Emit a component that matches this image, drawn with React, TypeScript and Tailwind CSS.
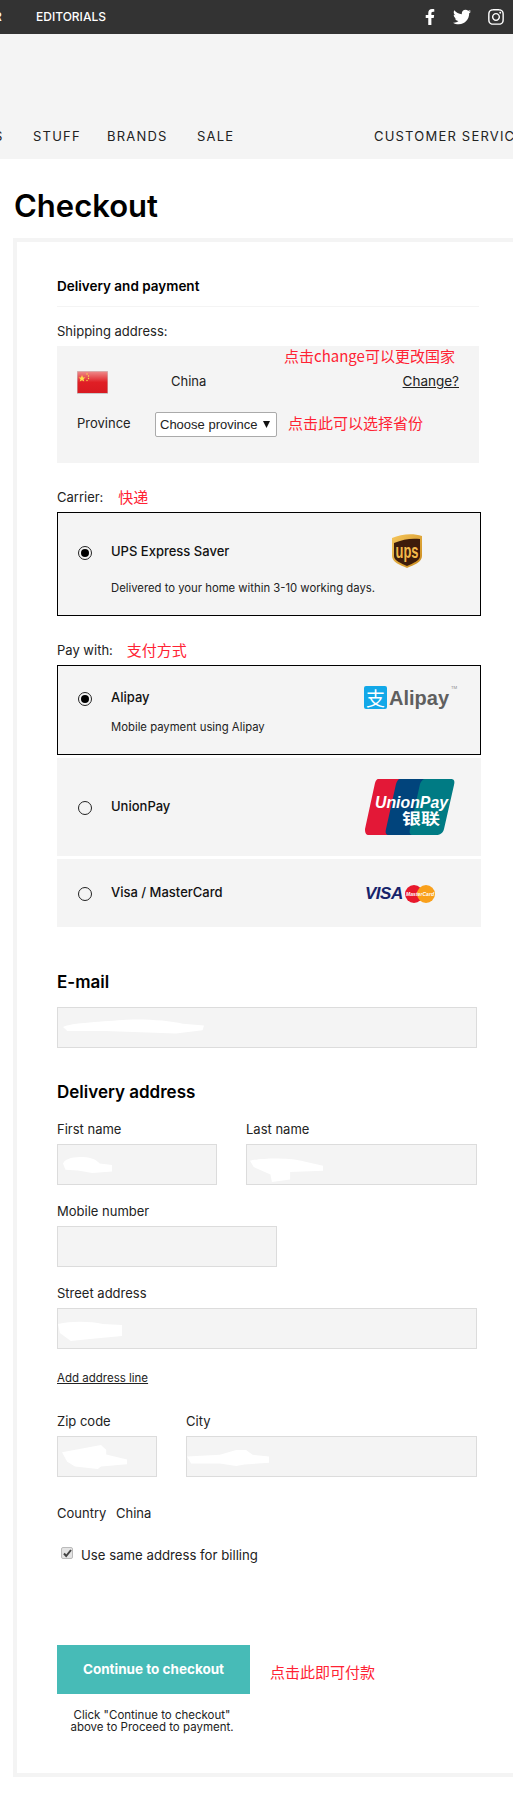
import type { ReactNode } from "react"
import { FaFacebookF, FaTwitter, FaInstagram } from "react-icons/fa"

const cjk = "font-['Noto_Sans_CJK_SC',sans-serif] text-[15px] leading-5 text-[#ff2233]"

function Note({ children, className = "" }: { children: ReactNode; className?: string }) {
  return <span className={`${cjk} ${className}`}>{children}</span>
}

function Radio({ checked = false }: { checked?: boolean }) {
  return (
    <span className="flex h-[14px] w-[14px] shrink-0 items-center justify-center rounded-full border border-[#222] bg-[#f4f4f4]">
      {checked && <span className="h-2 w-2 rounded-full bg-black" />}
    </span>
  )
}

function Option({
  title,
  desc,
  checked,
  logo,
  className,
  radioTop,
  titleTop,
  descTop,
  logoTop,
}: {
  title: string
  desc?: string
  checked?: boolean
  logo: ReactNode
  className: string
  radioTop: string
  titleTop: string
  descTop?: string
  logoTop: string
}) {
  return (
    <div className={`flex w-[424px] bg-[#f4f4f4] ${className}`}>
      <div className={radioTop}>
        <Radio checked={checked} />
      </div>
      <div className={`ml-[19px] w-[240px] shrink-0 whitespace-nowrap ${titleTop}`}>
        <div className="h-5 text-[13px] font-medium leading-5 text-[#111]">{title}</div>
        {desc && <div className={`h-4 text-[11.300px] leading-4 text-[#222] ${descTop}`}>{desc}</div>}
      </div>
      <div className={`ml-auto w-[116px] shrink-0 ${logoTop}`}>{logo}</div>
    </div>
  )
}

function Blob({ d, className }: { d: string; className: string }) {
  return (
    <svg className={`absolute ${className}`} viewBox="0 0 100 20" preserveAspectRatio="none">
      <path d={d} fill="#fff" />
    </svg>
  )
}

function Field({ label, className, children }: { label: string; className: string; children?: ReactNode }) {
  return (
    <div className={className}>
      <div className="h-5 text-[13px] leading-5 text-[#222]">{label}</div>
      <div className="relative mt-[5px] h-[41px] w-full border border-[#dcdcdc] bg-[#f4f4f4]">{children}</div>
    </div>
  )
}

function UpsLogo() {
  return (
    <svg className="ml-7 h-[35px] w-[30px]" viewBox="0 0 30 35">
      <defs>
        <linearGradient id="upsGold" x1="0" y1="0" x2="1" y2="1">
          <stop offset="0" stopColor="#f6c65b" />
          <stop offset="1" stopColor="#c98a1e" />
        </linearGradient>
      </defs>
      <path d="M0 5C9 1 21 0 30 3v20c0 6-8 9-15 12C8 32 0 29 0 23z" fill="url(#upsGold)" />
      <path d="M2 10c9-4 18-5 26-4v17c0 5-7 7-13 10C9 30 2 28 2 23z" fill="#3d1c0b" />
      <text x="15" y="25" textAnchor="middle" fontSize="21" fontWeight="700" textLength="23" lengthAdjust="spacingAndGlyphs" fill="#f3b94a" className="font-['Liberation_Sans',sans-serif]">
        ups
      </text>
    </svg>
  )
}

function AlipayLogo() {
  return (
    <div className="flex items-start">
      <div className="flex h-[23px] w-[23px] items-center justify-center rounded-[2px] bg-[#12a8e8] font-['Noto_Sans_CJK_SC',sans-serif] text-[19px] leading-none text-white">
        支
      </div>
      <span className="ml-[2px] font-['Liberation_Sans',sans-serif] text-[20px] font-bold leading-[24px] text-[#5f5f5f]">Alipay</span>
      <span className="ml-[2px] text-[4px] leading-[4px] text-[#888]">TM</span>
    </div>
  )
}

function UnionPayLogo() {
  return (
    <svg className="h-14 w-[90px]" viewBox="0 0 90 56">
      <path d="M13 0h30c4 0 6 2 5 6L38 50c-1 4-4 6-8 6H4c-3 0-4-2-4-6L10 4c1-3 2-4 3-4z" fill="#e31837" />
      <path d="M35 0h33c3 0 4 2 3 6L61 50c-1 4-4 6-8 6H24c-3 0-4-2-3-6L31 5c1-3 2-5 4-5z" fill="#01447c" />
      <path d="M60 0h26c3 0 4 2 3 6L79 50c-1 4-4 6-8 6H48c-3 0-4-2-3-6L55 5c1-3 3-5 5-5z" fill="#007b84" />
      <text x="10" y="29" fontSize="16.5" fontWeight="700" fontStyle="italic" textLength="73" lengthAdjust="spacingAndGlyphs" fill="#fff" className="font-['Liberation_Sans',sans-serif]">
        UnionPay
      </text>
      <text x="37" y="45" fontSize="15" fontWeight="700" textLength="38" lengthAdjust="spacingAndGlyphs" fill="#fff" className="font-['Noto_Sans_CJK_SC',sans-serif]">
        银联
      </text>
    </svg>
  )
}

function VisaLogo() {
  return (
    <div className="flex items-center">
      <span className="w-[38px] font-['Liberation_Sans',sans-serif] text-[17px] font-bold italic leading-[22px] tracking-[-0.5px] text-[#16236b]">VISA</span>
      <svg className="ml-[2px] h-[18px] w-[30px]" viewBox="0 0 30 18">
        <circle cx="9" cy="9" r="9" fill="#e8182c" />
        <circle cx="21" cy="9" r="9" fill="#f9a01b" />
        <text x="15" y="11" textAnchor="middle" fontSize="5.500" fontWeight="700" fontStyle="italic" textLength="28" lengthAdjust="spacingAndGlyphs" fill="#fff" className="font-['Liberation_Sans',sans-serif]">
          MasterCard
        </text>
      </svg>
    </div>
  )
}

function ChinaFlag() {
  return (
    <svg className="h-[23px] w-[31px] shrink-0" viewBox="0 0 31 23">
      <defs>
        <linearGradient id="flagRed" x1="0" y1="0" x2="0" y2="1">
          <stop offset="0" stopColor="#ef8a8a" />
          <stop offset="0.5" stopColor="#e01f25" />
          <stop offset="1" stopColor="#d81920" />
        </linearGradient>
      </defs>
      <rect width="31" height="23" fill="#c9c9c9" />
      <rect x="0.5" y="0.5" width="30" height="21.5" fill="url(#flagRed)" />
      <path d="M5 4l1 2.400 2.500.1-2 1.600.7 2.500L5 9.200l-2.200 1.400.7-2.500-2-1.600 2.500-.1z" fill="#ffe14a" />
      <circle cx="10" cy="3" r="0.7" fill="#ffe14a" />
      <circle cx="11.500" cy="5" r="0.7" fill="#ffe14a" />
      <circle cx="11.500" cy="7.500" r="0.7" fill="#ffe14a" />
      <circle cx="10" cy="9.500" r="0.7" fill="#ffe14a" />
    </svg>
  )
}

export default function App() {
  return (
    <div className="relative h-[1806px] w-[513px] overflow-hidden bg-white font-['Inter','Liberation_Sans',sans-serif] text-[#222]">
      {/* Top bar */}
      <div className="flex h-[34px] items-center bg-[#333] text-white">
        <span className="ml-[-6px] w-[42px] text-[12px] font-medium">R</span>
        <span className="text-[12px] font-medium">EDITORIALS</span>
        <FaFacebookF className="ml-auto h-[16px] w-[16px]" />
        <FaTwitter className="ml-[15px] h-[18px] w-[18px]" />
        <FaInstagram className="ml-[16px] mr-[8px] h-[18px] w-[18px]" />
      </div>

      {/* Main nav */}
      <div className="flex h-[125px] items-end whitespace-nowrap bg-[#f4f4f4] pb-[13px] text-[13px] leading-5 tracking-[1.2px] text-[#222]">
        <span className="ml-[-6px] w-[39px] shrink-0">S</span>
        <span className="w-[74px] shrink-0">STUFF</span>
        <span className="w-[90px] shrink-0">BRANDS</span>
        <span className="w-[177px] shrink-0">SALE</span>
        <span className="shrink-0">CUSTOMER SERVICE</span>
      </div>

      <h1 className="ml-[14px] mt-[27px] h-10 text-[31px] font-semibold leading-10 text-black">Checkout</h1>

      {/* Checkout panel */}
      <div className="ml-[13px] mt-[12px] w-[510px] border-y-4 border-l-4 border-[#f4f4f4] pl-10 pt-[34px] pb-10">
        <div className="h-[31px] w-[422px] border-b border-[#f4f4f4] text-[13.500px] font-semibold leading-5 text-black">Delivery and payment</div>

        <div className="mt-[14px] h-5 text-[13px] leading-5">Shipping address:</div>
        <div className="relative mt-[5px] h-[117px] w-[422px] bg-[#f4f4f4] px-5 pt-[25px]">
          <Note className="absolute left-[227px] top-0">点击change可以更改国家</Note>
          <div className="flex h-[23px] items-start text-[13px] leading-5">
            <ChinaFlag />
            <span className="ml-[63px]">China</span>
            <a className="ml-auto text-[13.500px] underline">Change?</a>
          </div>
          <div className="mt-[18px] flex items-center text-[13px]">
            <span className="mb-[1px] w-[78px]">Province</span>
            <div className="flex h-[25px] w-[122px] items-center justify-between whitespace-nowrap rounded-[2px] border border-[#aaa] bg-white pl-1 pr-[6px] font-['Liberation_Sans',sans-serif] text-[13px]">
              <span>Choose province</span>
              <svg className="h-[7px] w-[7px] shrink-0" viewBox="0 0 7 7">
                <path d="M0 0h7L3.500 7z" fill="#111" />
              </svg>
            </div>
            <Note className="mb-[3px] ml-[11px]">点击此可以选择省份</Note>
          </div>
        </div>

        <div className="mt-6 flex h-5 text-[13px] leading-5">
          <span>Carrier:</span>
          <Note className="ml-[15px]">快递</Note>
        </div>
        <Option
          className="mt-[5px] h-[104px] border border-black pl-5"
          checked
          title="UPS Express Saver"
          desc="Delivered to your home within 3-10 working days."
          radioTop="mt-[33px]"
          titleTop="mt-7"
          descTop="mt-[19px]"
          logoTop="mt-5"
          logo={<UpsLogo />}
        />

        <div className="mt-6 flex h-5 text-[13px] leading-5">
          <span>Pay with:</span>
          <Note className="ml-[14px]">支付方式</Note>
        </div>
        <Option
          className="mt-[5px] h-[90px] border border-black pl-5"
          checked
          title="Alipay"
          desc="Mobile payment using Alipay"
          radioTop="mt-[26px]"
          titleTop="mt-[21px]"
          descTop="mt-3"
          logoTop="mt-5"
          logo={<AlipayLogo />}
        />
        <Option
          className="mt-[3px] h-[98px] pl-[21px]"
          title="UnionPay"
          radioTop="mt-[43px]"
          titleTop="mt-[38px]"
          logoTop="mt-[21px]"
          logo={<UnionPayLogo />}
        />
        <Option
          className="mt-[3px] h-[68px] pl-[21px]"
          title="Visa / MasterCard"
          radioTop="mt-7"
          titleTop="mt-[23px]"
          logoTop="mt-6"
          logo={<VisaLogo />}
        />

        <h2 className="mt-[43px] h-6 text-[17px] font-semibold leading-6 text-black">E-mail</h2>
        <div className="relative mt-[13px] h-[41px] w-[420px] border border-[#dcdcdc] bg-[#f4f4f4]">
          <Blob className="left-[5px] top-[11px] h-[16px] w-[141px]" d="M0 10C5 5 30 3 45 1 60 0 75 2 85 6L100 8 99 14 80 18 60 17 30 15 3 15z" />
        </div>

        <h2 className="mt-8 h-6 text-[17px] font-semibold leading-6 text-black">Delivery address</h2>
        <div className="mt-[15px] flex w-[420px] gap-[29px]">
          <Field label="First name" className="w-40">
            <Blob className="left-[5px] top-[12px] h-4 w-[49px]" d="M0 8C5 1 25 0 40 0 60 0 70 5 75 8L100 10 100 18 60 20 30 17 5 16z" />
          </Field>
          <Field label="Last name" className="w-[231px]">
            <Blob className="left-[3px] top-[12px] h-[25px] w-[73px]" d="M0 3C10 1 50 0 70 3L100 7 100 11 55 12 55 18 30 20 28 14 5 8z" />
          </Field>
        </div>
        <Field label="Mobile number" className="mt-4 w-[220px]" />
        <Field label="Street address" className="mt-4 w-[420px]">
          <Blob className="left-0 top-[12px] h-5 w-[64px]" d="M0 3C20 0 50 0 70 3L100 4 100 15 50 18 20 20 3 12z" />
        </Field>

        <a className="mt-[21px] block h-4 text-[11.500px] leading-4 underline">Add address line</a>

        <div className="mt-[25px] flex w-[420px] gap-[29px]">
          <Field label="Zip code" className="w-[100px]">
            <Blob className="left-[4px] top-[8px] h-6 w-[65px]" d="M0 6 60 0 68 4 68 8 100 12 100 16 60 18 55 20 20 18 8 14z" />
          </Field>
          <Field label="City" className="w-[291px]">
            <Blob className="left-0 top-[13px] h-4 w-[82px]" d="M0 8 40 6 60 0 72 0 80 6 100 8 100 16 70 18 60 20 40 17 5 17z" />
          </Field>
        </div>

        <div className="mt-[26px] h-5 text-[13px] leading-5">
          Country <span className="ml-[6px]">China</span>
        </div>

        <div className="mt-[23px] flex h-5 items-center text-[13.200px]">
          <span className="ml-1 mt-[-6px] flex h-3 w-3 items-center justify-center rounded-[2px] border border-[#bbb] bg-[#e4e4e4]">
            <svg className="h-[9px] w-[9px]" viewBox="0 0 9 9">
              <path d="M1 4.500l2.200 2.500L8 1" fill="none" stroke="#444" strokeWidth="2" />
            </svg>
          </span>
          <span className="ml-2">Use same address for billing</span>
        </div>

        <div className="mt-[79px] flex items-center">
          <button className="h-[49px] w-[193px] bg-[#47bbb7] text-[13.500px] font-bold text-white">Continue to checkout</button>
          <Note className="ml-5 mt-1">点击此即可付款</Note>
        </div>
        <p className="mt-[15px] w-[190px] text-center text-[11.500px] leading-3 text-[#222]">
          Click "Continue to checkout"
          <br />
          above to Proceed to payment.
        </p>
      </div>
    </div>
  )
}
